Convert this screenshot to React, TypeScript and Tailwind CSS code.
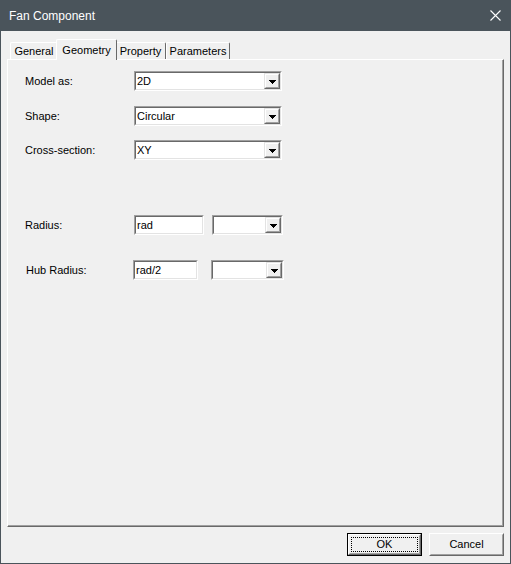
import type { ReactNode } from "react";

function Sunken({ className, children }: { className: string; children?: ReactNode }) {
  return (
    <div className={`border border-t-[#a0a0a0] border-l-[#a0a0a0] border-r-white border-b-white ${className}`}>
      <div className="flex h-full items-center border border-t-[#696969] border-l-[#696969] border-r-[#e3e3e3] border-b-[#e3e3e3] bg-white pl-px">
        {children}
      </div>
    </div>
  );
}

function Arrow() {
  return (
    <svg width="7" height="4" viewBox="0 0 7 4" shapeRendering="crispEdges" aria-hidden="true">
      <path d="M0 0h7v1h-1v1h-1v1h-1v1h-1v-1h-1v-1h-1v-1h-1z" fill="#000" />
    </svg>
  );
}

function Combo({ value, className }: { value?: string; className: string }) {
  return (
    <Sunken className={`h-[20px] ${className}`}>
      <span className="flex-1 truncate leading-none">{value}</span>
      <div className="h-[16px] w-[16px] shrink-0 border border-t-[#e3e3e3] border-l-[#e3e3e3] border-r-[#696969] border-b-[#696969]">
        <div className="flex h-full items-center justify-center border border-t-white border-l-white border-r-[#a0a0a0] border-b-[#a0a0a0] bg-[#f0f0f0] pt-px">
          <Arrow />
        </div>
      </div>
    </Sunken>
  );
}

function TextBox({ value, className }: { value: string; className: string }) {
  return (
    <Sunken className={`h-[20px] ${className}`}>
      <span className="leading-none">{value}</span>
    </Sunken>
  );
}

function Row({ label, className, labelClass = "w-[126px] pl-[17px]", children }: { label: string; className: string; labelClass?: string; children: ReactNode }) {
  return (
    <div className={`flex h-[20px] items-center ${className}`}>
      <span className={`shrink-0 ${labelClass}`}>{label}</span>
      {children}
    </div>
  );
}

function Tab({ label, active, width }: { label: string; active?: boolean; width: string }) {
  if (active) {
    return (
      <div className={`relative z-10 -mx-[2px] -mb-px flex h-[21px] items-start justify-center rounded-t-[2px] border-t border-l border-r border-t-white border-l-white border-r-[#696969] bg-[#f0f0f0] pt-[2px] ${width}`}>
        {label}
      </div>
    );
  }
  return (
    <div className={`flex h-[17px] items-center justify-center rounded-t-[2px] border-t border-l border-r border-t-white border-l-white border-r-[#696969] bg-[#f0f0f0] pt-px ${width}`}>
      {label}
    </div>
  );
}

function Button({ label, isDefault }: { label: string; isDefault?: boolean }) {
  const inner = (
    <div className="h-full border border-t-white border-l-white border-r-[#696969] border-b-[#696969]">
      <div className="flex h-full items-center justify-center border border-t-[#f0f0f0] border-l-[#f0f0f0] border-r-[#a0a0a0] border-b-[#a0a0a0] bg-[#f0f0f0]">
        {isDefault ? (
          <div className="flex h-[15px] w-[67px] items-center justify-center border border-dotted border-black">{label}</div>
        ) : (
          label
        )}
      </div>
    </div>
  );
  return isDefault ? (
    <div className="h-[23px] w-[75px] border border-black">{inner}</div>
  ) : (
    <div className="h-[23px] w-[75px]">{inner}</div>
  );
}

export default function App() {
  return (
    <div className="flex h-[564px] w-[511px] flex-col font-['Liberation_Sans',Arial,sans-serif] text-[11px] text-black">
      <div className="flex h-[31px] shrink-0 items-center justify-between bg-[#4a545b] pl-[9px] pr-[10px]">
        <span className="text-[12px] text-white">Fan Component</span>
        <svg width="11" height="11" viewBox="0 0 11 11" aria-hidden="true">
          <path d="M0.5 0.5L10.5 10.5M10.5 0.5L0.5 10.5" stroke="#fff" strokeWidth="1.1" />
        </svg>
      </div>

      <div className="flex flex-1 flex-col border-x border-b border-[#4a545b] bg-[#f0f0f0] px-[6px] pt-[8px]">
        <div className="flex h-[20px] items-end pl-[3px]">
          <Tab label="General" width="w-[48px]" />
          <Tab label="Geometry" width="w-[61px]" active />
          <Tab label="Property" width="w-[51px]" />
          <Tab label="Parameters" width="w-[64px]" />
        </div>

        <div className="h-[468px] border border-t-white border-l-white border-r-[#696969] border-b-[#696969]">
          <div className="flex h-full flex-col border-r border-b border-r-[#a0a0a0] border-b-[#a0a0a0]">
            <Row label="Model as:" className="mt-[11px]">
              <Combo value="2D" className="w-[148px]" />
            </Row>
            <Row label="Shape:" className="mt-[15px]">
              <Combo value="Circular" className="w-[148px]" />
            </Row>
            <Row label="Cross-section:" className="mt-[14px]">
              <Combo value="XY" className="w-[148px]" />
            </Row>
            <Row label="Radius:" className="mt-[55px]">
              <TextBox value="rad" className="w-[70px]" />
              <Combo className="ml-[8px] w-[71px]" />
            </Row>
            <Row label="Hub Radius:" className="mt-[25px]" labelClass="w-[125px] pl-[18px]">
              <TextBox value="rad/2" className="w-[65px]" />
              <Combo className="ml-[13px] w-[73px]" />
            </Row>
          </div>
        </div>

        <div className="mt-[6px] flex justify-end gap-[7px]">
          <Button label="OK" isDefault />
          <Button label="Cancel" />
        </div>
      </div>
    </div>
  );
}
